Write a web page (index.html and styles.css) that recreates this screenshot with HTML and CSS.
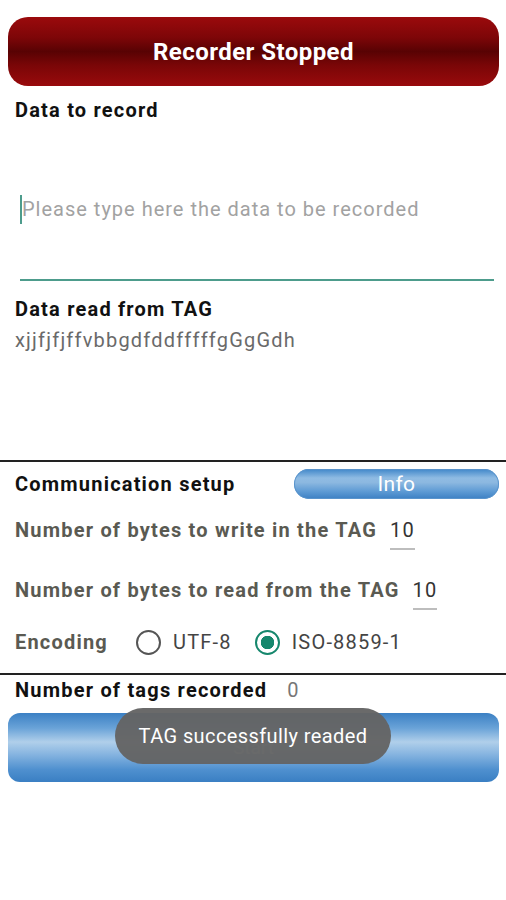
FILE: index.html
```html
<!DOCTYPE html>
<html lang="en">
<head>
    <meta charset="UTF-8">
    <meta name="viewport" content="width=device-width, initial-scale=1.0">
    <title>NFC Recorder</title>
    <link rel="stylesheet" href="styles.css">
</head>
<body>
    <div class="screen">
        <button class="status-btn">Recorder Stopped</button>

        <div class="label">Data to record</div>
        <div class="data-input">
            <span class="caret"></span>
            <span class="placeholder">Please type here the data to be recorded</span>
        </div>

        <div class="label read-label">Data read from TAG</div>
        <div class="read-value">xjjfjfjffvbbgdfddfffffgGgGdh</div>

        <div class="section setup">
            <div class="setup-head">
                <div class="label">Communication setup</div>
                <button class="info-btn">Info</button>
            </div>
            <div class="field-row write-row">
                <span class="field-label">Number of bytes to write in the TAG</span>
                <span class="field-value">10</span>
            </div>
            <div class="field-row read-row">
                <span class="field-label">Number of bytes to read from the TAG</span>
                <span class="field-value">10</span>
            </div>
            <div class="field-row encoding-row">
                <span class="field-label">Encoding</span>
                <span class="radio"></span>
                <span class="radio-text">UTF-8</span>
                <span class="radio checked"></span>
                <span class="radio-text">ISO-8859-1</span>
            </div>
        </div>

        <div class="section counter">
            <div class="counter-row">
                <span class="label">Number of tags recorded</span>
                <span class="count">0</span>
            </div>
            <div class="action-wrap">
                <button class="action-btn">Start</button>
                <div class="toast">TAG successfully readed</div>
            </div>
        </div>
    </div>
</body>
</html>
```

FILE: styles.css
```css
body {
    margin: 0;
    padding: 0;
    background: #fff;
    font-family: Roboto, "Noto Sans", sans-serif;
}
.screen {
    width: 506px;
    height: 900px;
    overflow: hidden;
    letter-spacing: 1.2px;
}
button {
    font-family: inherit;
    border: none;
    padding: 0;
}
.status-btn {
    display: block;
    margin: 17px 7px 0 8px;
    width: 491px;
    height: 69px;
    border-radius: 20px;
    color: #fff;
    font-size: 24px;
    font-weight: bold;
    letter-spacing: 0.45px;
    background: linear-gradient(#9b0a0c 0%, #7d0608 30%, #580203 50%, #7a0607 70%, #990a0c 100%);
}
.label {
    font-size: 20px;
    font-weight: bold;
    color: #111;
    line-height: 24px;
}
.screen > .label {
    padding-left: 15px;
}
.screen > .label:nth-of-type(1) {
    margin-top: 12px;
}
.data-input {
    display: flex;
    align-items: center;
    margin: 0 12px 0 20px;
    height: 159px;
    border-bottom: 2px solid #4d9c8c;
    box-sizing: border-box;
    padding-top: 17px;
}
.caret {
    width: 2px;
    height: 29px;
    background: #4d9c8c;
}
.placeholder {
    color: #a2a2a2;
    font-size: 20px;
    letter-spacing: 1px;
}
.read-label {
    margin-top: 16px;
}
.read-value {
    padding-left: 15px;
    font-size: 20px;
    color: #6a6a6a;
    line-height: 26px;
    margin-top: 6px;
}
.section {
    border-top: 2px solid #222;
}
.setup {
    margin-top: 107px;
    padding: 7px 7px 0 15px;
}
.setup-head {
    display: flex;
    align-items: center;
    justify-content: space-between;
    height: 30px;
}
.info-btn {
    width: 205px;
    height: 30px;
    border-radius: 15px;
    color: #fff;
    font-size: 21px;
    letter-spacing: 0.3px;
    background: linear-gradient(#3f86c9 0%, #8fbbe3 30%, #8cb8e0 45%, #5d9ad4 75%, #3b7fc3 100%);
    box-shadow: inset 0 0 0 1px #5a94cc;
}
.field-row {
    display: flex;
    align-items: center;
    font-size: 20px;
}
.field-label {
    color: #5a5a52;
    font-weight: bold;
}
.field-value {
    margin-left: 13px;
    color: #333;
    padding-bottom: 6px;
    border-bottom: 2px solid #bdbdbd;
    position: relative;
    top: 4px;
}
.write-row {
    margin-top: 16px;
    height: 30px;
}
.read-row {
    margin-top: 30px;
    height: 30px;
}
.encoding-row {
    margin-top: 22px;
    height: 30px;
}
.encoding-row .field-label {
    margin-right: 28px;
}
.radio {
    width: 25px;
    height: 25px;
    border: 2px solid #555;
    border-radius: 50%;
    box-sizing: border-box;
    margin-right: 12px;
}
.radio.checked {
    border-color: #16876d;
    background: radial-gradient(circle, #16876d 0 6.5px, transparent 7px);
}
.radio-text {
    color: #444;
    margin-right: 23px;
}
.counter {
    margin-top: 16px;
    padding: 4px 7px 0 8px;
}
.counter-row {
    padding-left: 7px;
    display: flex;
    align-items: center;
    height: 22px;
}
.count {
    margin-left: 20px;
    font-size: 20px;
    color: #777;
}
.action-wrap {
    position: relative;
    margin-top: 12px;
}
.action-btn {
    display: block;
    width: 491px;
    height: 69px;
    border-radius: 12px;
    color: #e8f0f8;
    font-size: 19px;
    background: linear-gradient(#3b80c4 0%, #6aa3d8 22%, #b0cfea 42%, #86b4e0 60%, #4f90cf 82%, #3a7fc3 100%);
}
.toast {
    position: absolute;
    left: 107px;
    top: -5px;
    width: 276px;
    height: 56px;
    border-radius: 28px;
    background: rgba(100, 100, 100, 0.96);
    color: #fff;
    font-size: 20px;
    letter-spacing: 0.4px;
    display: flex;
    align-items: center;
    justify-content: center;
}
```
